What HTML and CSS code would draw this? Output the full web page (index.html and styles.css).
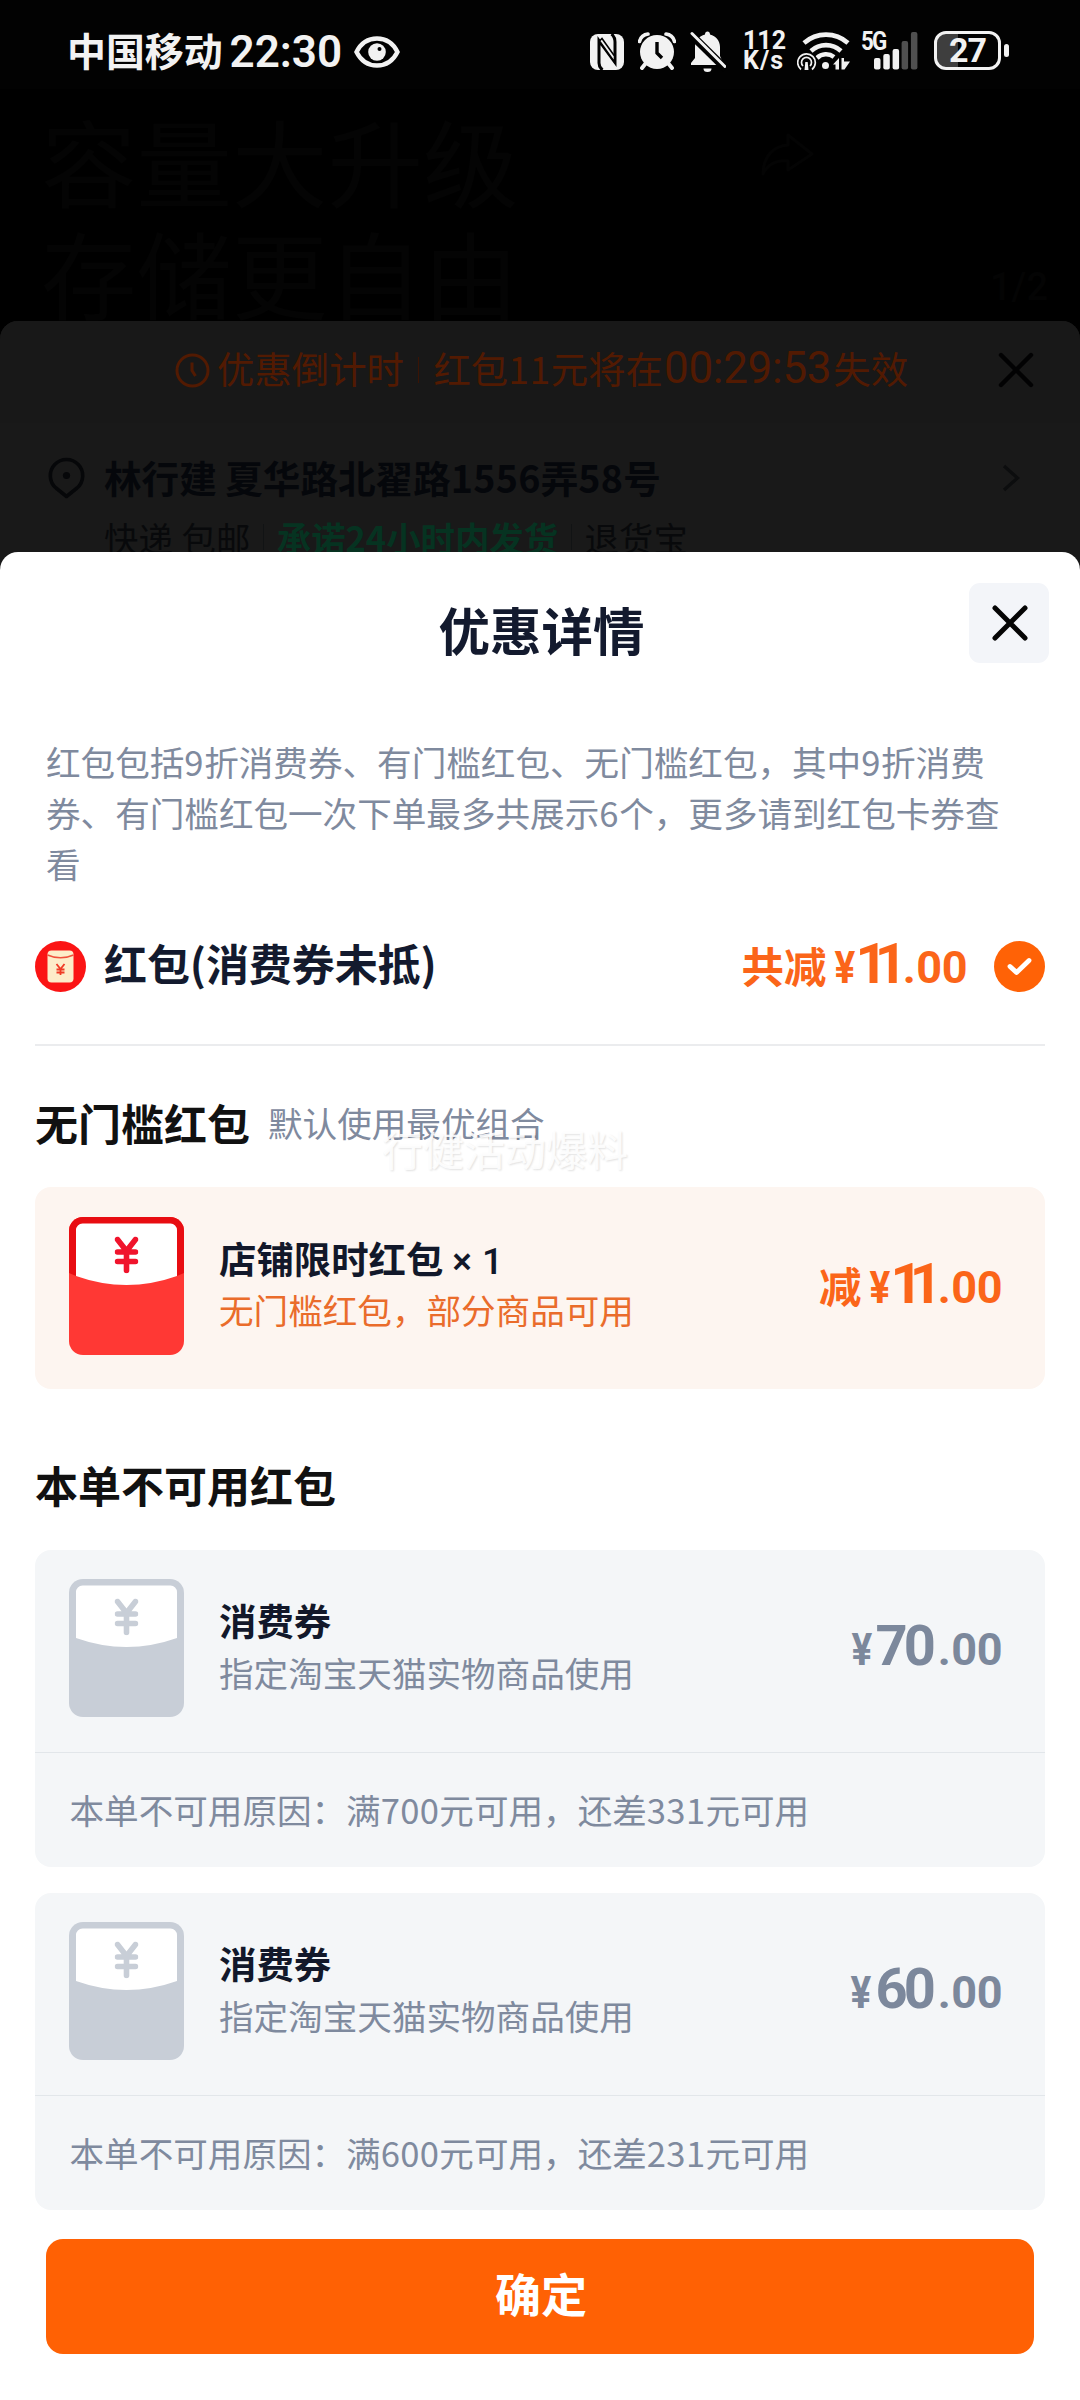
FILE: index.html
```
<!DOCTYPE html>
<html lang="zh-CN">
<head>
<meta charset="utf-8">
<title>优惠详情</title>
<link rel="stylesheet" href="styles.css">
</head>
<body>
<svg class="defs" width="0" height="0" aria-hidden="true">
  <symbol id="yen" viewBox="0 0 24 37">
    <path d="M3 3 12 14.5 21 3M12 14v20M3 15.5h18M3 25h18" fill="none" stroke="currentColor" stroke-width="5.6" stroke-linecap="round" stroke-linejoin="round"/>
  </symbol>
</svg>
<div class="phone">
  <header class="status">
    <div class="status-left">
      <span class="carrier">中国移动</span>
      <span class="clock">22:30</span>
      <svg class="eye" width="46" height="32" viewBox="0 0 46 32">
        <path d="M2.500 16C7 7 14 2.500 23 2.500S39 7 43.500 16C39 25 32 29.500 23 29.500S7 25 2.500 16Z" fill="none" stroke="#f2f2f2" stroke-width="4.400"/>
        <circle cx="23" cy="16" r="8.800" fill="#f2f2f2"/><circle cx="25.500" cy="13" r="2" fill="#000"/>
      </svg>
    </div>
    <div class="status-right">
      <svg class="nfc" width="34" height="36" viewBox="0 0 34 36">
        <rect x="0" y="0" width="34" height="36" rx="8" fill="#f2f2f2"/>
        <path d="M12.500 36C10 34 9 32 9 29V6.500L25 28.500V8C25 4.500 24 2 21.500 0" fill="none" stroke="#020202" stroke-width="3"/>
        <path d="M9.500 7 24.500 28V22L12 4.500Z" fill="#f2f2f2" stroke="#020202" stroke-width="1.600"/>
      </svg>
      <svg class="alarm" width="38" height="38" viewBox="0 0 38 38">
        <circle cx="19" cy="20" r="17" fill="#f2f2f2"/>
        <path d="M8 31 4 36M30 31 34 36" stroke="#f2f2f2" stroke-width="4" stroke-linecap="round"/>
        <path d="M1.500 9.500A10 10 0 0 1 10 2M36.500 9.500A10 10 0 0 0 28 2" stroke="#f2f2f2" stroke-width="3.600" stroke-linecap="round" fill="none"/>
        <path d="M19 10V21L24 26" fill="none" stroke="#020202" stroke-width="3.400"/>
      </svg>
      <svg class="bell" width="36" height="42" viewBox="0 0 36 42">
        <path d="M17.500 0.500C19 .5 20 1.500 20 3.500C26 5 30 10 30 16V25L34 34H1V32L5 27V16C5 10 9 5 15 3.500C15 1.500 16 .5 17.500 .5Z" fill="#f2f2f2"/>
        <path d="M13.500 37.500H21.500A4 3.500 0 0 1 13.500 37.500Z" fill="#f2f2f2"/>
        <path d="M1 3.500 36 38" stroke="#020202" stroke-width="8"/>
        <path d="M2 2.500 35 35.500" stroke="#f2f2f2" stroke-width="3" stroke-linecap="round"/>
      </svg>
      <div class="speed"><span class="speed-n">112</span><span>K/s</span></div>
      <svg class="wifi" width="54" height="40" viewBox="0 0 54 40">
        <g fill="none" stroke="#f2f2f2" stroke-width="4.600">
          <path d="M7 12A33 33 0 0 1 51 12"/>
          <path d="M14 20A22 22 0 0 1 44 20"/>
          <path d="M20 27A13 13 0 0 1 37 26"/>
        </g>
        <circle cx="28.500" cy="34.500" r="3.500" fill="#f2f2f2"/>
        <circle cx="9.500" cy="31.500" r="11" fill="#020202"/>
        <g fill="none" stroke="#f2f2f2" stroke-width="1.700">
          <path d="M4 38.500A8.800 8.800 0 1 1 15 38.500"/>
          <path d="M6 35A5 5 0 1 1 13 35"/>
        </g>
        <path d="M8.300 31H10.700L11.500 39H7.500Z" fill="#f2f2f2"/>
        <path d="M36 33.500 42 27V38.500H38.500V33.500ZM44.500 27H47V30.500H53L47.500 38.500H44.500Z" fill="#f2f2f2"/>
      </svg>
      <div class="cell">
        <span class="cell-gen">5G</span>
        <svg width="44" height="39" viewBox="0 0 44 39">
          <g fill="#f2f2f2"><rect x="0" y="27" width="6.500" height="11.500" rx="2"/><rect x="9.300" y="23" width="6.500" height="15.500" rx="2"/><rect x="18.600" y="18" width="6.500" height="20.500" rx="2"/></g>
          <g fill="#505050"><rect x="27.600" y="10" width="6.500" height="28.500" rx="2"/><rect x="36.900" y="1" width="6.500" height="37.500" rx="2"/></g>
        </svg>
      </div>
      <div class="battery"><div class="battery-box">27</div><i class="battery-nub"></i></div>
    </div>
  </header>

  <section class="banner">
    <div class="banner-copy">容量大升级<br>存储更自由</div>
    <div class="banner-side">
      <svg width="56" height="46" viewBox="0 0 56 46"><path d="M28 3 52 22 28 38V29C16 28 8 32 3 42C3 24 14 14 28 13Z" fill="none" stroke="#040404" stroke-width="3" stroke-linejoin="round"/></svg>
      <span class="banner-page">1/2</span>
    </div>
  </section>

  <section class="order">
    <div class="countdown">
      <svg width="35" height="35" viewBox="0 0 35 35"><circle cx="17.500" cy="17.500" r="15.500" fill="none" stroke="#521a02" stroke-width="3"/><path d="M17 9.500V17.500L20.500 23" fill="none" stroke="#521a02" stroke-width="3"/></svg>
      <span class="cd-label">优惠倒计时</span>
      <i class="cd-bar"></i>
      <span class="cd-text">红包<span class="cd-num">11</span>元将在</span>
      <span class="cd-time">00:29:53</span>
      <span class="cd-end">失效</span>
      <svg class="cd-close" width="36" height="36" viewBox="0 0 36 36"><path d="M3 3 33 33M33 3 3 33" stroke="#020203" stroke-width="4.400" stroke-linecap="round"/></svg>
    </div>
    <div class="address">
      <svg width="37" height="42" viewBox="0 0 37 42"><path d="M18.500 39.500 8 31A16.200 16.200 0 1 1 29 31Z" fill="none" stroke="#060709" stroke-width="3.600" stroke-linejoin="round"/><circle cx="18.500" cy="18.500" r="3.600" fill="#060709"/></svg>
      <span class="address-text">林行建 夏华路北翟路<span class="addr-num">1556</span>弄<span class="addr-num">58</span>号</span>
      <svg class="chevron" width="20" height="30" viewBox="0 0 20 30"><path d="M3 3 16.500 15 3 27" fill="none" stroke="#0c0d0e" stroke-width="3.200"/></svg>
    </div>
    <div class="ship">
      <span class="ship-a">快递 包邮</span><i></i><b>承诺24小时内发货</b><i></i><span>退货宝</span>
    </div>
  </section>

  <main class="sheet">
    <div class="sheet-head">
      <h1>优惠详情</h1>
      <button class="close" aria-label="关闭"><svg width="40" height="40" viewBox="0 0 40 40"><path d="M5 5 35 35M35 5 5 35" stroke="#050505" stroke-width="5" stroke-linecap="round"/></svg></button>
    </div>
    <p class="note">红包包括<span class="num">9</span>折消费券、有门槛红包、无门槛红包，其中<span class="num">9</span>折消费<br>券、有门槛红包一次下单最多共展示<span class="num">6</span>个，更多请到红包卡券查<br>看</p>

    <div class="body">
      <div class="total">
        <svg width="51" height="51" viewBox="0 0 51 51">
          <circle cx="25.500" cy="25.500" r="25.500" fill="#fb1414"/>
          <rect x="12.500" y="9.500" width="26" height="32" rx="4" fill="#fdecc9"/>
          <path d="M12.500 14C20 17.500 31 17.500 38.500 14" fill="none" stroke="#f0503c" stroke-width="1.500"/>
          <path d="M21.500 23 25.500 28 29.500 23M25.500 28V34M21.500 28.500H29.500M21.500 31.500H29.500" fill="none" stroke="#f03a25" stroke-width="1.800"/>
        </svg>
        <span class="total-name">红包(消费券未抵)</span>
        <div class="price orange"><span class="p-label">共减</span><span class="p-yen">¥</span><span class="p-int ones">11</span><span class="p-dec"><span class="dot">.</span>00</span></div>
        <svg class="tick" width="51" height="51" viewBox="0 0 51 51"><circle cx="25.500" cy="25.500" r="25.500" fill="#ff6206"/><path d="M16 25.500 22.500 31.500 35 19.500" fill="none" stroke="#fff" stroke-width="4.800" stroke-linecap="round" stroke-linejoin="round"/></svg>
      </div>

      <div class="section-head first">
        <h2>无门槛红包</h2><span class="hint">默认使用最优组合</span>
        <span class="watermark">行健活动爆料</span>
      </div>
      <article class="card warm">
        <div class="card-main">
          <svg class="envelope red" width="115" height="138" viewBox="0 0 115 138">
            <rect width="115" height="138" rx="14" fill="#ff3834"/>
            <path d="M0 56V14A14 14 0 0 1 14 0H101A14 14 0 0 1 115 14V56L108 59H7Z" fill="#e80d12"/>
            <path d="M7 59V13A6.500 6.500 0 0 1 13.500 6.500H101.500A6.500 6.500 0 0 1 108 13V59Q57.500 77 7 59Z" fill="#fff"/>
            <use href="#yen" x="45.500" y="19.500" width="24" height="37" color="#f0142c"/>
          </svg>
          <div class="card-text"><h3>店铺限时红包<span class="times">×</span><span class="count">1</span></h3><p>无门槛红包，部分商品可用</p></div>
          <div class="price orange"><span class="p-label">减</span><span class="p-yen">¥</span><span class="p-int ones">11</span><span class="p-dec"><span class="dot">.</span>00</span></div>
        </div>
      </article>

      <div class="section-head second"><h2>本单不可用红包</h2></div>
      <div class="cards">
        <article class="card">
          <div class="card-main">
            <svg class="envelope" width="115" height="138" viewBox="0 0 115 138">
              <rect width="115" height="138" rx="14" fill="#c8ced7"/>
              <path d="M7 59V13A6.500 6.500 0 0 1 13.500 6.500H101.500A6.500 6.500 0 0 1 108 13V59Q57.500 77 7 59Z" fill="#fff"/>
              <use href="#yen" x="45.500" y="19.500" width="24" height="37" color="#c8ced7"/>
            </svg>
            <div class="card-text"><h3>消费券</h3><p>指定淘宝天猫实物商品使用</p></div>
            <div class="price"><span class="p-yen">¥</span><span class="p-int">70</span><span class="p-dec"><span class="dot">.</span>00</span></div>
          </div>
          <div class="reason">本单不可用原因：满<span class="num">700</span>元可用，还差<span class="num">331</span>元可用</div>
        </article>
        <article class="card">
          <div class="card-main">
            <svg class="envelope" width="115" height="138" viewBox="0 0 115 138">
              <rect width="115" height="138" rx="14" fill="#c8ced7"/>
              <path d="M7 59V13A6.500 6.500 0 0 1 13.500 6.500H101.500A6.500 6.500 0 0 1 108 13V59Q57.500 77 7 59Z" fill="#fff"/>
              <use href="#yen" x="45.500" y="19.500" width="24" height="37" color="#c8ced7"/>
            </svg>
            <div class="card-text"><h3>消费券</h3><p>指定淘宝天猫实物商品使用</p></div>
            <div class="price"><span class="p-yen">¥</span><span class="p-int six">60</span><span class="p-dec"><span class="dot">.</span>00</span></div>
          </div>
          <div class="reason">本单不可用原因：满<span class="num">600</span>元可用，还差<span class="num">231</span>元可用</div>
        </article>
      </div>
    </div>
    <button class="confirm">确定</button>
  </main>
</div>
</body>
</html>
```
FILE: styles.css
```
* { box-sizing: border-box; }
body { margin: 0; background: #000; font-family: "Noto Sans CJK SC", sans-serif; }
h1, h2, h3, p { margin: 0; }
button { border: 0; padding: 0; font-family: inherit; }
svg { display: block; flex: none; }
.defs { position: absolute; }
.phone { width: 1080px; height: 2400px; display: flex; flex-direction: column; overflow: hidden; background: #000; }

/* Status bar */
.status { height: 89px; flex: none; display: flex; justify-content: space-between; background: #020202; color: #f2f2f2; padding: 0 71px 0 67px; }
.status-left, .status-right { display: flex; align-items: flex-start; }
.carrier { font-size: 38.900px; line-height: 98px; font-weight: 700; white-space: nowrap; }
.clock { font: 600 44px/72px Roboto, sans-serif; margin: 0 0 0 7px; padding-top: 15.500px; letter-spacing: 0; }
.eye { margin: 36px 0 0 12px; }
.nfc { margin-top: 34px; }
.alarm { margin: 32px 0 0 14px; }
.bell { margin: 31px 0 0 14px; }
.speed { display: flex; flex-direction: column; font: 700 25px/20px Roboto, sans-serif; margin: 31px 0 0 17px; width: 44px; letter-spacing: 1px; }
.speed-n { letter-spacing: 0; }
.wifi { margin: 31px 0 0 10px; }
.cell { display: flex; position: relative; width: 58px; margin: 31px 0 0 9px; justify-content: flex-end; }
.cell-gen { position: absolute; left: 1px; top: 0; font: 700 26px/21px Roboto, sans-serif; letter-spacing: -2px; transform: scaleX(.86); transform-origin: left; }
.battery { display: flex; align-items: center; gap: 3px; margin: 31px 0 0 16px; height: 39px; }
.battery-box { width: 67px; height: 39px; border: 3.500px solid #f2f2f2; border-radius: 12px; background: linear-gradient(90deg, #3e3e3e 21px, #020202 21px); font: 700 34px/33px Roboto, sans-serif; text-align: center; letter-spacing: -1px; }
.battery-nub { width: 5px; height: 13px; border-radius: 3px; background: #f2f2f2; }

/* Dimmed page behind the sheet */
.banner { height: 232px; flex: none; display: flex; justify-content: space-between; padding: 15px 32px 0 41px; color: #040404; }
.banner-copy { font-size: 95.500px; line-height: 112px; font-weight: 400; }
.banner-side { display: flex; flex-direction: column; width: 288px; justify-content: space-between; padding: 28px 0 10px; }
.banner-page { align-self: flex-end; font: 500 38px/48px Roboto, sans-serif; }
.order { height: 251px; flex: none; margin-bottom: -20px; background: #191919; border-radius: 18px 18px 0 0; overflow: hidden; }
.countdown { height: 102px; display: flex; align-items: center; padding: 0 46px 4px 175px; color: #521a02; background: #181818; font-size: 37.400px; white-space: nowrap; }
.cd-label { margin-left: 7px; line-height: 40px; padding-bottom: 4px; }
.cd-bar { width: 1.500px; height: 26px; margin: 0 14px; background: #3a1405; }
.cd-text { padding-bottom: 4px; line-height: 40px; }
.cd-num { letter-spacing: .5px; }
.cd-time { font: 400 44px/50px Roboto, sans-serif; letter-spacing: -.3px; margin: 0 2px 4px 1px; }
.cd-end { padding-bottom: 4px; line-height: 40px; }
.cd-close { margin-left: auto; }
.address { display: flex; align-items: center; height: 80px; margin-top: 16px; padding: 0 59px 2px 48px; }
.address-text { font-size: 37.600px; font-weight: 600; color: #05070b; margin-left: 19px; line-height: 40px; padding-bottom: 3px; white-space: nowrap; }
.addr-num { letter-spacing: .3px; }
.chevron { margin-left: auto; }
.ship { display: flex; align-items: center; padding-left: 104px; font-size: 34.400px; line-height: 38px; color: #08090b; white-space: nowrap; margin-top: -1px; }
.ship-a { word-spacing: 1px; }
.ship i { width: 1.500px; height: 26px; background: #111314; margin: 0 12.500px; }
.ship b { font-weight: 700; color: #063321; }

/* Sheet */
.sheet { position: relative; flex: 1; background: #fff; border-radius: 18px 18px 0 0; display: flex; flex-direction: column; }
.sheet-head { display: grid; grid-template-columns: 80px 1fr 80px; padding: 0 31px 0 34px; height: 154px; flex: none; }
.sheet-head h1 { grid-column: 2; text-align: center; font-size: 51.500px; line-height: 154px; font-weight: 700; color: #131a2e; }
.close { width: 80px; height: 80px; margin-top: 31px; border-radius: 11px; background: #f3f5f9; display: grid; place-items: center; }
.close svg { margin-left: 1px; }
.note { padding: 30px 46px 0; font-size: 34.600px; line-height: 51.200px; color: #7f8a9e; white-space: nowrap; }
.num { letter-spacing: .7px; }
.body { padding: 0 35px; }
.total { height: 156px; display: flex; align-items: center; border-bottom: 2px solid #ebecee; }
.total-name { font-size: 43px; line-height: 46px; font-weight: 600; color: #131a2e; margin-left: 18px; padding-bottom: 9px; white-space: nowrap; letter-spacing: -.1px; }
.price { display: flex; align-items: baseline; margin-left: auto; color: #7c889c; font-weight: 700; white-space: nowrap; line-height: 1; padding-bottom: 5px; }
.orange { color: #fb6519; }
.p-label { font-size: 42.500px; line-height: 42px; margin-right: 9px; }
.p-yen { font: 700 45px/45px Roboto, sans-serif; transform: scaleX(.86); transform-origin: right; margin-left: -4px; }
.p-int { font: 700 56px/56px Roboto, sans-serif; letter-spacing: -4px; margin-left: 3px; }
.p-int.ones { letter-spacing: -13px; margin-left: 0; margin-right: 3px; }
.p-int.six { margin-left: 4px; }
.p-dec { font: 700 45px/45px Roboto, sans-serif; letter-spacing: -.5px; }
.dot { margin: 0 1px 0 6px; }
.tick { margin-left: 27px; }
.section-head { position: relative; display: flex; align-items: center; white-space: nowrap; }
.section-head.first { height: 141.400px; padding-top: 11px; }
.section-head.second { height: 161px; padding-top: 29px; }
h2 { font-size: 43px; line-height: 46px; font-weight: 600; color: #111; }
.hint { font-size: 34.600px; line-height: 40px; color: #7f8a9e; margin-left: 18px; }
.watermark { position: absolute; left: 347px; top: 79px; font-size: 41px; line-height: 46px; color: rgba(255,255,255,.9); text-shadow: 1px 1px 2px rgba(0,0,0,.12); }
.cards { display: flex; flex-direction: column; gap: 26px; }
.card { border-radius: 16px; background: #f4f6f8; overflow: hidden; }
.card.warm { background: #fdf5f0; }
.card-main { height: 202px; display: flex; align-items: center; padding: 0 43px 6px 34px; }
.warm .card-main { padding-bottom: 4px; }
.card-text { margin-left: 35px; padding-bottom: 5px; white-space: nowrap; }
.card h3 { font-size: 37.400px; line-height: 52px; font-weight: 600; color: #12182a; }
.times, .count { font: 500 37px/40px Roboto, sans-serif; }
.times { margin-left: 9px; }
.count { margin-left: 10px; }
.card p { font-size: 34.600px; line-height: 52px; color: #7f8a9e; }
.card.warm h3, .card.warm p { line-height: 51px; }
.card.warm p { color: #ea6c2b; }
.reason { border-top: 1px solid #e2e6ea; height: 115px; line-height: 112px; padding-left: 34.500px; font-size: 34.600px; color: #7f8a9e; white-space: nowrap; }
.reason .num { letter-spacing: .35px; }
.confirm { margin: 29px 46px 0; height: 115px; flex: none; border-radius: 17px; background: #ff6104; color: #fff; font-size: 46px; font-weight: 700; line-height: 106px; padding: 0 0 9px 2px; }
```
